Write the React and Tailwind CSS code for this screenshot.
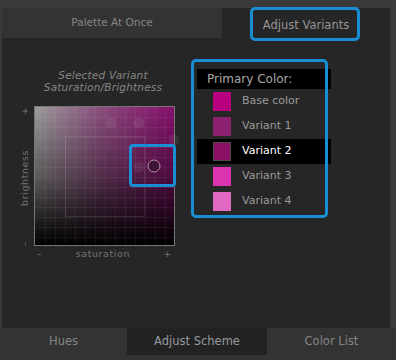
import React from 'react';

const font = { fontFamily: '"DejaVu Sans", Verdana, sans-serif' };

const variants = [
  { name: 'Base color', color: '#b9007f' },
  { name: 'Variant 1', color: '#8d2171' },
  { name: 'Variant 2', color: '#8a1066', selected: true },
  { name: 'Variant 3', color: '#dc33b1' },
  { name: 'Variant 4', color: '#e168c1' },
];

function SatBrightChart() {
  const lines = [];
  for (let i = 10; i < 139; i += 10) {
    lines.push(<line key={'v' + i} x1={i + 0.5} y1={0} x2={i + 0.5} y2={138} />);
    lines.push(<line key={'h' + i} x1={0} y1={i + 0.5} x2={139} y2={i + 0.5} />);
  }
  return (
    <svg width="139" height="138" className="block overflow-visible">
      <defs>
        <linearGradient id="sat" x1="0" y1="0" x2="1" y2="0">
          <stop offset="0" stopColor="#9c9c9c" />
          <stop offset="0.5" stopColor="#8a4a7c" />
          <stop offset="1" stopColor="#870e6c" />
        </linearGradient>
        <linearGradient id="bri" x1="0" y1="0" x2="0" y2="1">
          <stop offset="0" stopColor="#000" stopOpacity="0" />
          <stop offset="0.5" stopColor="#000" stopOpacity="0.42" />
          <stop offset="1" stopColor="#000" stopOpacity="1" />
        </linearGradient>
      </defs>
      <rect width="139" height="138" fill="url(#sat)" />
      <rect width="139" height="138" fill="url(#bri)" />
      <g stroke="rgba(255,255,255,0.055)" strokeWidth="1">{lines}</g>
      <rect x="30.5" y="29.5" width="79" height="80" fill="none" stroke="rgba(255,255,255,0.1)" />
      <g fill="rgba(255,255,255,0.07)">
        <circle cx="76" cy="16" r="5.5" />
        <circle cx="104" cy="16" r="5.5" />
        <circle cx="139" cy="33" r="5.5" />
        <circle cx="104" cy="60" r="5.5" />
      </g>
      <circle cx="119" cy="59" r="6" fill="#3e1533" stroke="#b88aab" strokeWidth="1" />
    </svg>
  );
}

export default function App() {
  return (
    <div className="relative w-[396px] h-[360px] bg-[#3a3a3a] flex flex-col overflow-hidden" style={font}>
      {/* top tabs */}
      <div className="flex h-[30px] mt-2 ml-[2px] mr-[6px]">
        <div className="w-[220px] bg-[#333333] flex items-center justify-center text-[10.5px] text-[#858585]">
          Palette At Once
        </div>
        <div className="flex-1 bg-[#262626] flex items-center justify-center pt-[5px] text-[11.5px] text-[#959595]">
          Adjust Variants
        </div>
      </div>

      {/* content */}
      <div className="flex-1 bg-[#262626] ml-[2px] mr-[6px] flex">
        <div className="w-[188px] pl-[14px] pt-[31px] flex flex-col items-center">
          <div className="text-center italic text-[10.5px] leading-[12px] text-[#858585] tracking-[0.2px]">
            <div>Selected Variant</div>
            <div>Saturation/Brightness</div>
          </div>
          <div className="mt-[13px] self-start">
            <div className="flex">
              <div className="w-[18px] h-[140px] flex flex-row justify-between items-center [writing-mode:vertical-rl] rotate-180 text-[9.5px] text-[#727272] tracking-[0.6px] py-[1px]">
                <span>–</span>
                <span>brightness</span>
                <span>+</span>
              </div>
              <div className="w-[141px] h-[140px] border border-[#767676]">
                <SatBrightChart />
              </div>
            </div>
            <div className="ml-[18px] w-[141px] flex justify-between px-[3px] mt-[2px] text-[9.5px] leading-[12px] text-[#727272] tracking-[0.6px]">
              <span>–</span>
              <span>saturation</span>
              <span>+</span>
            </div>
          </div>
        </div>

        <div className="w-[134px] ml-[7px] pt-[31px]">
          <div className="h-[20px] bg-black flex items-center pl-[10px] text-[12px] text-[#a8a8a8]">
            Primary Color:
          </div>
          {variants.map((v) => (
            <div
              key={v.name}
              className={`h-[25px] flex items-center pl-[16px] gap-[11px] text-[11px] ${
                v.selected ? 'bg-black text-white' : 'text-[#9a9a9a]'
              }`}
            >
              <div
                className={`w-[18px] h-[19px] ${v.selected ? 'border border-[#4a4a4a]' : ''}`}
                style={{ backgroundColor: v.color }}
              />
              <span>{v.name}</span>
            </div>
          ))}
        </div>
      </div>

      {/* bottom tabs */}
      <div className="flex h-[32px] bg-[#333333] text-[11.5px]">
        <div className="w-[127px] flex items-center justify-center pb-[4px] text-[#858585]">Hues</div>
        <div className="w-[140px] h-[27px] bg-[#222222] flex items-center justify-center text-[#979aa0]">
          Adjust Scheme
        </div>
        <div className="flex-1 flex items-center justify-center pb-[4px] text-[#858585]">Color List</div>
      </div>

      {/* highlight annotations */}
      <div className="absolute left-[250px] top-[7px] w-[110px] h-[34px] border-[3px] border-[#1a8ed5] rounded-[5px]" />
      <div className="absolute left-[191px] top-[59px] w-[137px] h-[159px] border-[3px] border-[#1a8ed5] rounded-[5px]" />
      <div className="absolute left-[129px] top-[144px] w-[47px] h-[43px] border-[3px] border-[#1a8ed5] rounded-[4px]" />
    </div>
  );
}
